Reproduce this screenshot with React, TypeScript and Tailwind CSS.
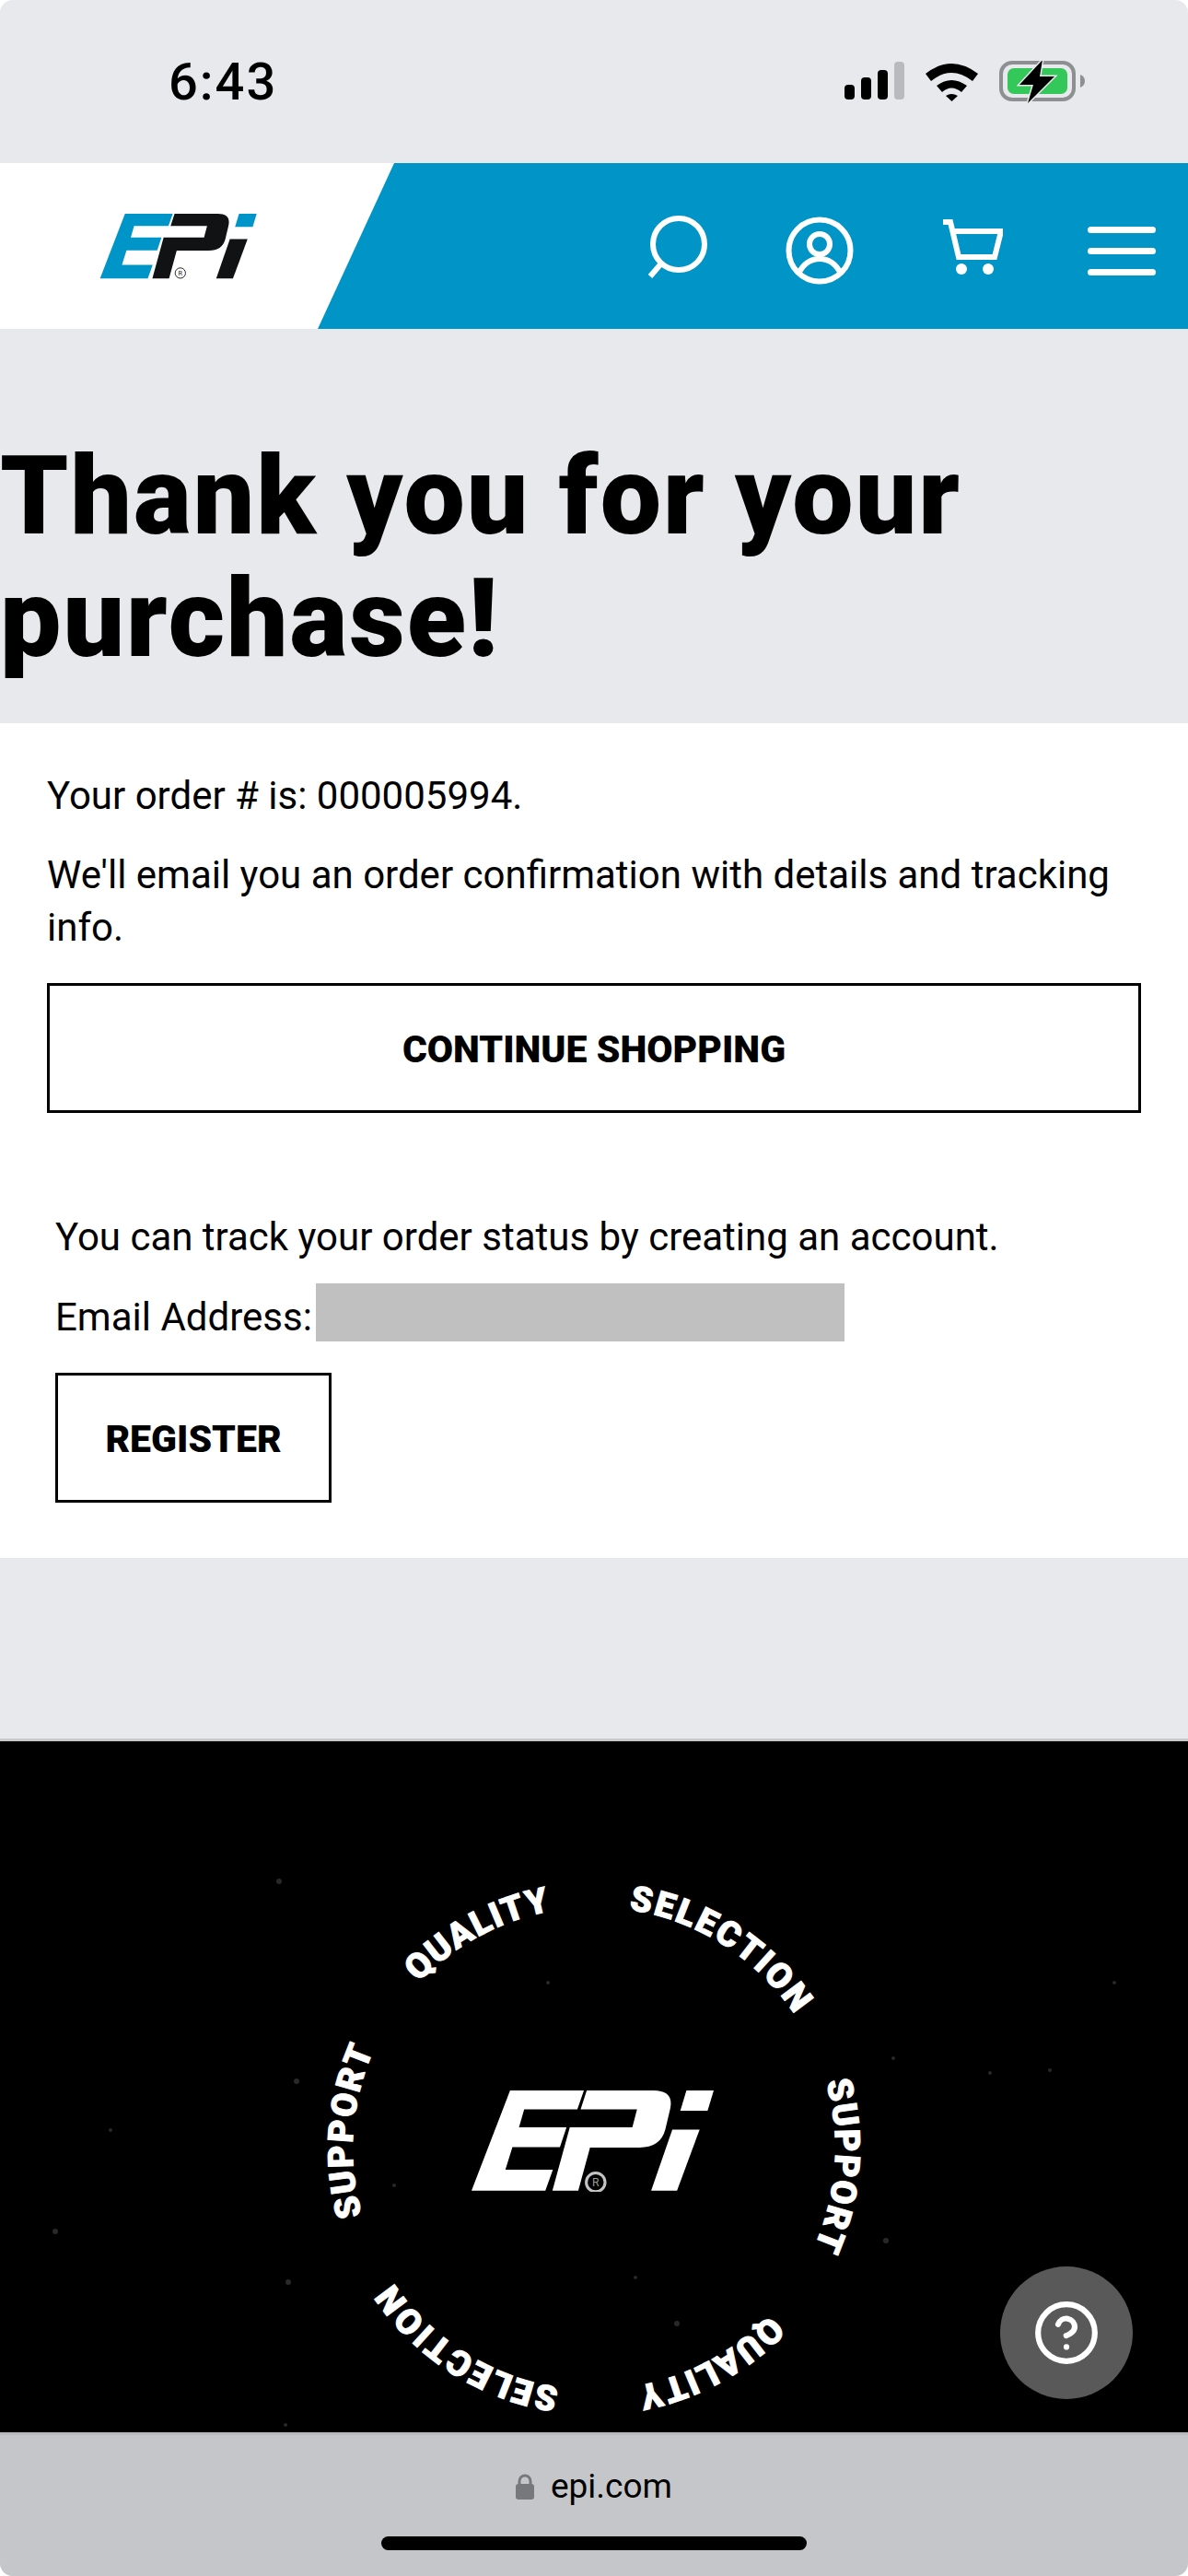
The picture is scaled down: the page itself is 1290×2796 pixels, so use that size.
import { CircleHelp } from "lucide-react";

const specks = [
  [303, 2040], [480, 2120], [595, 2150], [322, 2257], [1075, 2248], [970, 2232], [313, 2475], [428, 2370],
  [1140, 2245], [962, 2430], [690, 2470], [310, 2630], [735, 2520], [120, 2310], [1210, 2150], [60, 2420],
];

const Logo = ({ className, blue, dark, mark }: { className: string; blue: string; dark: string; mark: string }) => (
  <svg viewBox="83 67 517 215" className={className}>
    <path fill={blue} d="M165 67H322L308 107H195L184 145H285L271 187H170L155 235H256L240 280H83Z" />
    <path fill={dark} d="M328 67H470Q515 67 505 108L495 150Q485 188 440 188H335L310 280H255L292 145H425L435 107H315Z" />
    <path fill={blue} d="M540 67H598L585 110H527Z" />
    <path fill={dark} d="M510 150H568L520 280H465Z" />
    <circle cx="347" cy="262" r="17" fill="none" stroke={mark} strokeWidth="3" />
    <text x="347" y="270" textAnchor="middle" fontSize="22" fontFamily="Roboto, sans-serif" fill={mark}>R</text>
  </svg>
);

// words go clockwise round the logo, start angle and arc length taken from the picture
const ringWords = [
  { word: "QUALITY", angle: -46.6, arc: 165 },
  { word: "SELECTION", angle: 8.3, arc: 219 },
  { word: "SUPPORT", angle: 74, arc: 183 },
  { word: "QUALITY", angle: 133.4, arc: 165 },
  { word: "SELECTION", angle: 188.3, arc: 219 },
  { word: "SUPPORT", angle: 254, arc: 183 },
];

const FooterArt = () => (
  <svg viewBox="0 1888 1290 752" className="block h-[752px] w-[1290px]">
    {specks.map(([x, y], i) => (
      <circle key={i} cx={x} cy={y} r={i % 3 === 0 ? 3 : 2} fill="#fff" opacity={0.16} />
    ))}
    <defs>
      <path id="ring" d="M0 -262A262 262 0 1 1 0 262A262 262 0 1 1 0 -262" />
    </defs>
    <g transform="translate(645 2330)">
      {ringWords.map((w, i) => (
        <g key={i} transform={`rotate(${w.angle})`}>
          <text fill="#fff" stroke="#fff" strokeWidth="1" fontFamily="Roboto, sans-serif" fontWeight="900" fontSize="38">
            <textPath href="#ring" textLength={w.arc} lengthAdjust="spacing">
              {w.word}
            </textPath>
          </text>
        </g>
      ))}
    </g>
    <svg x="512" y="2267" width="264" height="110" viewBox="83 67 517 215">
      <path fill="#fff" d="M165 67H322L308 107H195L184 145H285L271 187H170L155 235H256L240 280H83Z" />
      <path fill="#fff" d="M328 67H470Q515 67 505 108L495 150Q485 188 440 188H335L310 280H255L292 145H425L435 107H315Z" />
      <path fill="#fff" d="M540 67H598L585 110H527Z" />
      <path fill="#fff" d="M510 150H568L520 280H465Z" />
      <circle cx="347" cy="262" r="20" fill="#000" stroke="#c4c4c4" strokeWidth="6" />
      <text x="347" y="271" textAnchor="middle" fontSize="24" fontFamily="Roboto, sans-serif" fill="#9a9a9a">R</text>
    </svg>
  </svg>
);

const StatusIcons = () => (
  <div className="flex items-center">
    <svg width="65" height="44" viewBox="0 0 65 44">
      <rect x="0" y="25" width="11" height="16" rx="4" fill="#000" />
      <rect x="18" y="17" width="11" height="24" rx="4" fill="#000" />
      <rect x="36" y="9" width="11" height="32" rx="4" fill="#000" />
      <rect x="54" y="0" width="11" height="41" rx="4" fill="#b9babd" />
    </svg>
    <svg width="57" height="44" viewBox="0 0 57 44" className="ml-[23px]">
      <path d="M0 13Q28 -9 57 13L51 21Q28 3 6 21Z" fill="#000" />
      <path d="M12 26Q28 14 45 26L39 33Q28 24 18 33Z" fill="#000" />
      <path d="M22 37Q28 33 35 37L28.500 43Z" fill="#000" />
    </svg>
    <svg width="93" height="46" viewBox="0 0 93 46" className="ml-[23px]">
      <rect x="2" y="2" width="79" height="40" rx="12" fill="none" stroke="#8e8f93" strokeWidth="4" />
      <rect x="9" y="8" width="65" height="28" rx="7" fill="#34c759" />
      <path d="M88 15Q93 17 93 22Q93 27 88 29Z" fill="#8e8f93" />
      <path d="M47 -1L22 26H37L31 46L60 17H44Z" fill="#000" stroke="#e8e9ed" strokeWidth="3" paintOrder="stroke" />
    </svg>
  </div>
);

const NavIcons = () => (
  <div className="mr-[35px] ml-auto flex items-center text-white">
    <svg width="66" height="68" viewBox="0 0 66 68" fill="none" stroke="currentColor" strokeWidth="6" className="mt-[2px]">
      <ellipse cx="34" cy="31" rx="28" ry="28" />
      <path d="M15 52L3 66" />
    </svg>
    <svg width="74" height="74" viewBox="0 0 74 74" fill="none" stroke="currentColor" strokeWidth="6" className="mt-[9px] ml-[84px]">
      <circle cx="37" cy="37" r="33.500" />
      <circle cx="37" cy="30" r="11" />
      <path d="M14 62Q22 46 37 46Q52 46 60 62" />
    </svg>
    <svg width="66" height="62" viewBox="0 0 66 62" className="mt-[2px] ml-[96px]">
      <path d="M1 4H9L18 42H57L64 14H13" fill="none" stroke="currentColor" strokeWidth="6" />
      <circle cx="21" cy="55" r="6" fill="currentColor" />
      <circle cx="50" cy="55" r="6" fill="currentColor" />
    </svg>
    <div className="mt-[10px] ml-[92px] flex w-[74px] flex-col gap-[16px]">
      <div className="h-[7px] rounded-full bg-white" />
      <div className="h-[7px] rounded-full bg-white" />
      <div className="h-[7px] rounded-full bg-white" />
    </div>
  </div>
);

export default function App() {
  return (
    <div className="relative h-[2796px] w-[1290px] overflow-hidden rounded-[14px] bg-[#e8e9ed] font-[Roboto,sans-serif] text-black">
      {/* status bar */}
      <div className="flex h-[177px] items-center justify-between pr-[112px] pl-[183px]">
        <span className="text-[56px] leading-none font-medium tracking-[2px]">6:43</span>
        <StatusIcons />
      </div>

      {/* header */}
      <div className="flex h-[180px] items-center bg-[#0094c7]">
        <div className="flex h-full w-[428px] items-center bg-white pl-[108px] [clip-path:polygon(0_0,100%_0,345px_100%,0_100%)]">
          <Logo className="h-[71px] w-[172px]" blue="#0095c8" dark="#111214" mark="#222" />
        </div>
        <NavIcons />
      </div>

      {/* title */}
      <div className="h-[428px] pt-[116px]">
        <h1 className="text-[118px] leading-[133px] font-black tracking-[2px] whitespace-nowrap">
          Thank you for your
          <br />
          purchase!
        </h1>
      </div>

      {/* order block */}
      <div className="h-[906px] bg-white pt-[50px]">
        <div className="pr-[51px] pl-[51px] text-[42px] leading-[57px]">
          <p>Your order # is: 000005994.</p>
          <p className="mt-[29px]">We'll email you an order confirmation with details and tracking info.</p>
          <button className="mt-[32px] flex h-[141px] w-full items-center justify-center border-[3px] border-black bg-white pt-[3px] text-[41px] font-black">
            CONTINUE SHOPPING
          </button>
        </div>
        <div className="mt-[106px] pl-[60px] text-[42px] leading-[57px]">
          <p>You can track your order status by creating an account.</p>
          <div className="mt-[22px] flex items-start">
            <span className="mt-[13px] leading-[47px]">Email Address:</span>
            <div className="ml-[4px] h-[63px] w-[574px] bg-[#c0c0c0]" />
          </div>
          <button className="mt-[34px] flex h-[141px] w-[300px] items-center justify-center border-[3px] border-black bg-white pt-[3px] text-[41px] font-black">
            REGISTER
          </button>
        </div>
      </div>

      <div className="h-[196px]" />

      {/* footer art */}
      <div className="relative h-[753px] overflow-hidden border-t-[3px] border-[#c9c9cb] bg-black">
        <FooterArt />
        <div className="absolute right-[60px] bottom-[36px] flex h-[144px] w-[144px] items-center justify-center rounded-full bg-[#595959] text-white">
          <CircleHelp size={74} strokeWidth={2} />
        </div>
      </div>

      {/* safari bar */}
      <div className="flex h-[156px] flex-col items-center border-t-[3px] border-[#b9babe] bg-[#c5c6ca]">
        <div className="mt-[34px] flex items-center gap-[18px]">
          <svg width="20" height="28" viewBox="0 0 20 28">
            <path d="M4 12V8a6 6 0 0 1 12 0v4" fill="none" stroke="#77787c" strokeWidth="3" />
            <rect x="0" y="11" width="20" height="17" rx="3" fill="#77787c" />
          </svg>
          <span className="text-[37px] leading-[44px]">epi.com</span>
        </div>
        <div className="mt-[32px] h-[15px] w-[462px] rounded-full bg-black" />
      </div>
    </div>
  );
}
